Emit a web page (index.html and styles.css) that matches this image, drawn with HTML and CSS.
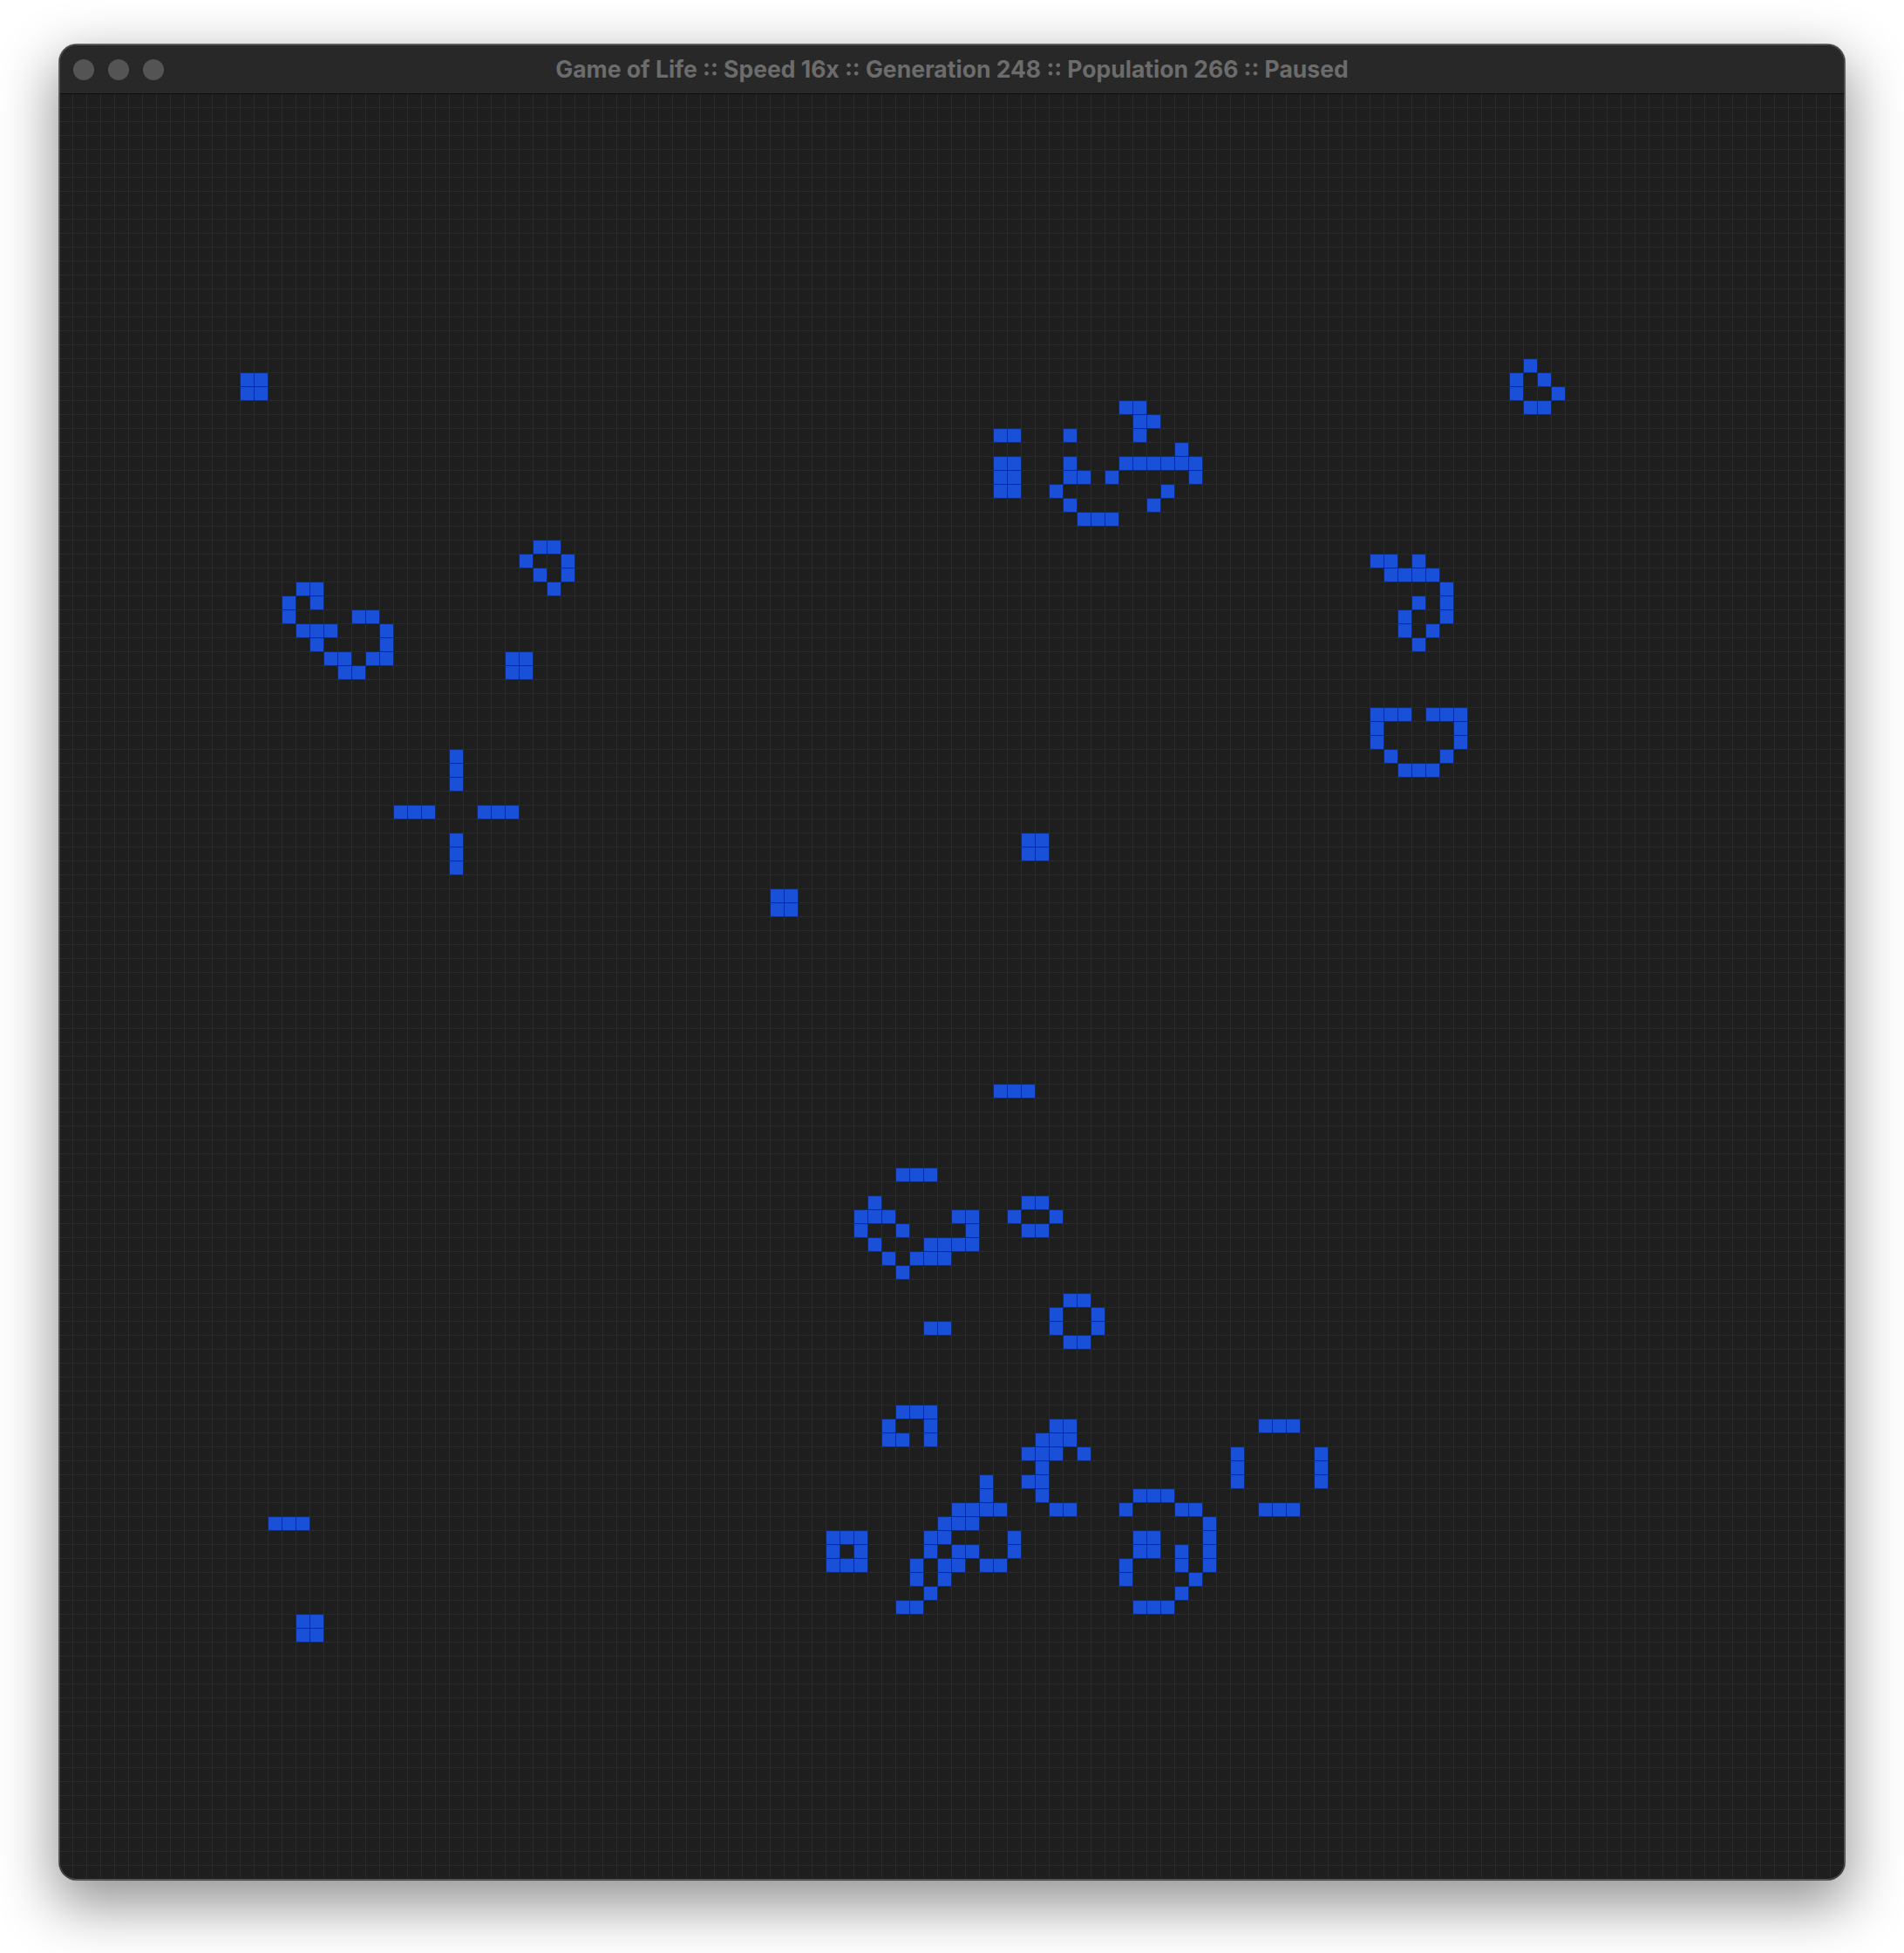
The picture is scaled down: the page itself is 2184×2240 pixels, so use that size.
FILE: index.html
```html
<!DOCTYPE html>
<html lang="en">
<head>
<meta charset="utf-8">
<title>Game of Life</title>
<link rel="stylesheet" href="styles.css">
</head>
<body>
<div class="window">
  <div class="titlebar">
    <div class="lights">
      <span class="light"></span>
      <span class="light"></span>
      <span class="light"></span>
    </div>
    <div class="title">Game of Life :: Speed 16x :: Generation 248 :: Population 266 :: Paused</div>
    <div class="spacer"></div>
  </div>
  <div class="board">
    <svg class="cells" width="2048" height="2048" viewBox="0 0 2048 2048" xmlns="http://www.w3.org/2000/svg">
      <g transform="translate(0 304)"><rect x="1680"/></g>
      <g transform="translate(0 320)"><rect x="208"/><rect x="224"/><rect x="1664"/><rect x="1696"/></g>
      <g transform="translate(0 336)"><rect x="208"/><rect x="224"/><rect x="1664"/><rect x="1712"/></g>
      <g transform="translate(0 352)"><rect x="1216"/><rect x="1232"/><rect x="1680"/><rect x="1696"/></g>
      <g transform="translate(0 368)"><rect x="1232"/><rect x="1248"/></g>
      <g transform="translate(0 384)"><rect x="1072"/><rect x="1088"/><rect x="1152"/><rect x="1232"/></g>
      <g transform="translate(0 400)"><rect x="1280"/></g>
      <g transform="translate(0 416)"><rect x="1072"/><rect x="1088"/><rect x="1152"/><rect x="1216"/><rect x="1232"/><rect x="1248"/><rect x="1264"/><rect x="1280"/><rect x="1296"/></g>
      <g transform="translate(0 432)"><rect x="1072"/><rect x="1088"/><rect x="1152"/><rect x="1168"/><rect x="1200"/><rect x="1296"/></g>
      <g transform="translate(0 448)"><rect x="1072"/><rect x="1088"/><rect x="1136"/><rect x="1264"/></g>
      <g transform="translate(0 464)"><rect x="1152"/><rect x="1248"/></g>
      <g transform="translate(0 480)"><rect x="1168"/><rect x="1184"/><rect x="1200"/></g>
      <g transform="translate(0 512)"><rect x="544"/><rect x="560"/></g>
      <g transform="translate(0 528)"><rect x="528"/><rect x="576"/><rect x="1504"/><rect x="1520"/><rect x="1552"/></g>
      <g transform="translate(0 544)"><rect x="544"/><rect x="576"/><rect x="1520"/><rect x="1536"/><rect x="1552"/><rect x="1568"/></g>
      <g transform="translate(0 560)"><rect x="272"/><rect x="288"/><rect x="560"/><rect x="1584"/></g>
      <g transform="translate(0 576)"><rect x="256"/><rect x="288"/><rect x="1552"/><rect x="1584"/></g>
      <g transform="translate(0 592)"><rect x="256"/><rect x="336"/><rect x="352"/><rect x="1536"/><rect x="1584"/></g>
      <g transform="translate(0 608)"><rect x="272"/><rect x="288"/><rect x="304"/><rect x="368"/><rect x="1536"/><rect x="1568"/></g>
      <g transform="translate(0 624)"><rect x="288"/><rect x="368"/><rect x="1552"/></g>
      <g transform="translate(0 640)"><rect x="304"/><rect x="320"/><rect x="352"/><rect x="368"/><rect x="512"/><rect x="528"/></g>
      <g transform="translate(0 656)"><rect x="320"/><rect x="336"/><rect x="512"/><rect x="528"/></g>
      <g transform="translate(0 704)"><rect x="1504"/><rect x="1520"/><rect x="1536"/><rect x="1568"/><rect x="1584"/><rect x="1600"/></g>
      <g transform="translate(0 720)"><rect x="1504"/><rect x="1600"/></g>
      <g transform="translate(0 736)"><rect x="1504"/><rect x="1600"/></g>
      <g transform="translate(0 752)"><rect x="448"/><rect x="1520"/><rect x="1584"/></g>
      <g transform="translate(0 768)"><rect x="448"/><rect x="1536"/><rect x="1552"/><rect x="1568"/></g>
      <g transform="translate(0 784)"><rect x="448"/></g>
      <g transform="translate(0 816)"><rect x="384"/><rect x="400"/><rect x="416"/><rect x="480"/><rect x="496"/><rect x="512"/></g>
      <g transform="translate(0 848)"><rect x="448"/><rect x="1104"/><rect x="1120"/></g>
      <g transform="translate(0 864)"><rect x="448"/><rect x="1104"/><rect x="1120"/></g>
      <g transform="translate(0 880)"><rect x="448"/></g>
      <g transform="translate(0 912)"><rect x="816"/><rect x="832"/></g>
      <g transform="translate(0 928)"><rect x="816"/><rect x="832"/></g>
      <g transform="translate(0 1136)"><rect x="1072"/><rect x="1088"/><rect x="1104"/></g>
      <g transform="translate(0 1232)"><rect x="960"/><rect x="976"/><rect x="992"/></g>
      <g transform="translate(0 1264)"><rect x="928"/><rect x="1104"/><rect x="1120"/></g>
      <g transform="translate(0 1280)"><rect x="912"/><rect x="928"/><rect x="944"/><rect x="1024"/><rect x="1040"/><rect x="1088"/><rect x="1136"/></g>
      <g transform="translate(0 1296)"><rect x="912"/><rect x="960"/><rect x="1040"/><rect x="1104"/><rect x="1120"/></g>
      <g transform="translate(0 1312)"><rect x="928"/><rect x="992"/><rect x="1008"/><rect x="1024"/><rect x="1040"/></g>
      <g transform="translate(0 1328)"><rect x="944"/><rect x="976"/><rect x="992"/><rect x="1008"/></g>
      <g transform="translate(0 1344)"><rect x="960"/></g>
      <g transform="translate(0 1376)"><rect x="1152"/><rect x="1168"/></g>
      <g transform="translate(0 1392)"><rect x="1136"/><rect x="1184"/></g>
      <g transform="translate(0 1408)"><rect x="992"/><rect x="1008"/><rect x="1136"/><rect x="1184"/></g>
      <g transform="translate(0 1424)"><rect x="1152"/><rect x="1168"/></g>
      <g transform="translate(0 1504)"><rect x="960"/><rect x="976"/><rect x="992"/></g>
      <g transform="translate(0 1520)"><rect x="944"/><rect x="992"/><rect x="1136"/><rect x="1152"/><rect x="1376"/><rect x="1392"/><rect x="1408"/></g>
      <g transform="translate(0 1536)"><rect x="944"/><rect x="960"/><rect x="992"/><rect x="1120"/><rect x="1136"/><rect x="1152"/></g>
      <g transform="translate(0 1552)"><rect x="1104"/><rect x="1120"/><rect x="1136"/><rect x="1168"/><rect x="1344"/><rect x="1440"/></g>
      <g transform="translate(0 1568)"><rect x="1120"/><rect x="1344"/><rect x="1440"/></g>
      <g transform="translate(0 1584)"><rect x="1056"/><rect x="1104"/><rect x="1120"/><rect x="1344"/><rect x="1440"/></g>
      <g transform="translate(0 1600)"><rect x="1056"/><rect x="1120"/><rect x="1232"/><rect x="1248"/><rect x="1264"/></g>
      <g transform="translate(0 1616)"><rect x="1024"/><rect x="1040"/><rect x="1056"/><rect x="1072"/><rect x="1136"/><rect x="1152"/><rect x="1216"/><rect x="1280"/><rect x="1296"/><rect x="1376"/><rect x="1392"/><rect x="1408"/></g>
      <g transform="translate(0 1632)"><rect x="240"/><rect x="256"/><rect x="272"/><rect x="1008"/><rect x="1024"/><rect x="1040"/><rect x="1312"/></g>
      <g transform="translate(0 1648)"><rect x="880"/><rect x="896"/><rect x="912"/><rect x="992"/><rect x="1008"/><rect x="1088"/><rect x="1232"/><rect x="1248"/><rect x="1312"/></g>
      <g transform="translate(0 1664)"><rect x="880"/><rect x="912"/><rect x="992"/><rect x="1024"/><rect x="1040"/><rect x="1088"/><rect x="1232"/><rect x="1248"/><rect x="1280"/><rect x="1312"/></g>
      <g transform="translate(0 1680)"><rect x="880"/><rect x="896"/><rect x="912"/><rect x="976"/><rect x="1008"/><rect x="1024"/><rect x="1056"/><rect x="1072"/><rect x="1216"/><rect x="1280"/><rect x="1312"/></g>
      <g transform="translate(0 1696)"><rect x="976"/><rect x="1008"/><rect x="1216"/><rect x="1296"/></g>
      <g transform="translate(0 1712)"><rect x="992"/><rect x="1280"/></g>
      <g transform="translate(0 1728)"><rect x="960"/><rect x="976"/><rect x="1232"/><rect x="1248"/><rect x="1264"/></g>
      <g transform="translate(0 1744)"><rect x="272"/><rect x="288"/></g>
      <g transform="translate(0 1760)"><rect x="272"/><rect x="288"/></g>
    </svg>
  </div>
</div>
</body>
</html>
```
FILE: styles.css
```css
html, body {
  margin: 0;
  padding: 0;
  background: #ffffff;
}

body {
  width: 2184px;
  height: 2240px;
  overflow: hidden;
}

.window {
  position: relative;
  width: 2048px;
  margin: 51px 0 0 68px;
  border-radius: 20px;
  overflow: hidden;
  background: #1e1e1e;
  box-shadow: 0 0 0 1px rgba(0, 0, 0, 0.55), 0 24px 64px 6px rgba(0, 0, 0, 0.42);
}

.window::after {
  content: "";
  position: absolute;
  inset: 0;
  border-radius: 20px;
  box-shadow: inset 0 0 0 1px rgba(255, 255, 255, 0.2);
  pointer-events: none;
}

.titlebar {
  display: grid;
  grid-template-columns: 1fr auto 1fr;
  align-items: center;
  height: 56px;
  background: #282828;
  border-bottom: 1px solid #0e0e0e;
}

.lights {
  display: flex;
  gap: 16px;
  padding-left: 16px;
  padding-top: 2px;
}

.light {
  width: 24px;
  height: 24px;
  border-radius: 50%;
  background: #545454;
}

.title {
  font-family: Inter, "Liberation Sans", sans-serif;
  font-weight: 700;
  font-size: 26.5px;
  color: #6c6c6c;
  white-space: nowrap;
  letter-spacing: 0;
}

.board {
  width: 2048px;
  height: 2048px;
  background-color: #1e1e1e;
  background-image:
    linear-gradient(to right, transparent 15px, #2b2b2b 15px),
    linear-gradient(to bottom, transparent 15px, #2b2b2b 15px);
  background-size: 16px 16px;
}

.cells {
  display: block;
  shape-rendering: crispEdges;
}

.cells rect {
  width: 15px;
  height: 15px;
  fill: #1a50d8;
}
```
